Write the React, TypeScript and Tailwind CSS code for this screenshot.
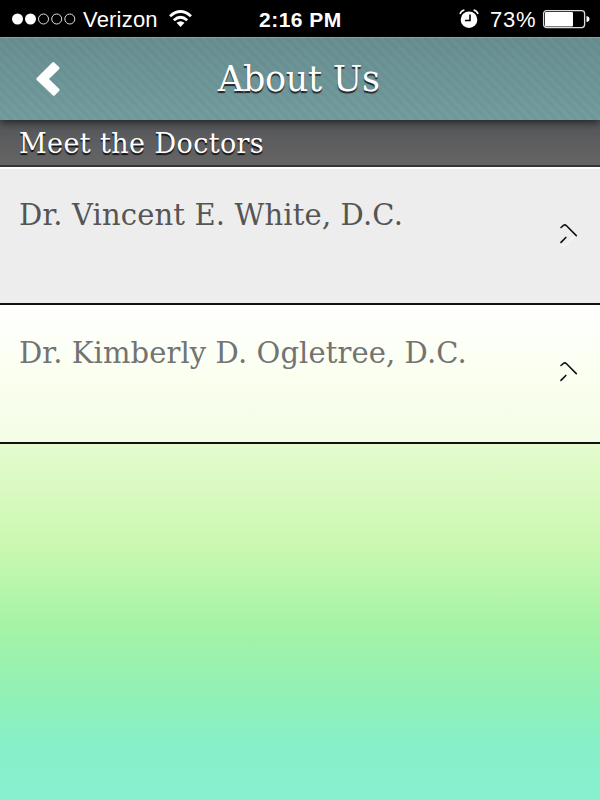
const slab = "font-['DejaVu_Serif',serif] whitespace-nowrap";

function RowArrow() {
  return (
    <svg className="mr-[20px] -mt-[4px] h-[26px] w-[24px]" viewBox="0 0 24 26" fill="none" strokeLinecap="round" strokeLinejoin="round">
      <path d="M5 24L8.500 25L20 14" stroke="#fff" strokeOpacity=".6" strokeWidth="1.500" />
      <path d="M5 6.500L7.500 4.300Q9 3.300 10.500 4.800L20.300 14.600" stroke="#111" strokeWidth="1.600" />
      <path d="M5 21.300L9.800 16.500" stroke="#111" strokeWidth="1.700" />
    </svg>
  );
}

export default function App() {
  return (
    <div className="flex h-[800px] w-[600px] flex-col overflow-hidden bg-[linear-gradient(180deg,#e5fbce_0px,#e5fbce_444px,#c9f8b0_550px,#a5f3a6_625px,#90f1b7_700px,#87f0c9_745px,#87f0cf_800px)]">
      <header className="relative z-10 shadow-[0_2px_9px_rgba(0,0,0,0.65)]">
        <div className="flex h-[37px] items-center bg-black font-['Liberation_Sans',sans-serif] text-white">
          <svg className="h-[37px] w-[76px] shrink-0" viewBox="0 0 76 37">
            <circle cx="17.500" cy="19" r="5.500" fill="#fff" />
            <circle cx="30.500" cy="19" r="5.500" fill="#fff" />
            <g fill="none" stroke="#ddd" strokeWidth="1">
              <circle cx="43.500" cy="19" r="5" />
              <circle cx="56.700" cy="19" r="5" />
              <circle cx="69.800" cy="19" r="5" />
            </g>
          </svg>
          <span className="ml-[7px] w-[76px] pt-[2px] text-[22px] tracking-[0.2px]">Verizon</span>
          <svg className="ml-[9px] h-[20px] w-[25px]" viewBox="0 0 25 20" fill="none" stroke="#fff" strokeWidth="2.700">
            <path d="M2 7.200Q12.500-2.200 23 7.200M5.800 11.200Q12.500 5.300 19.200 11.200" />
            <path d="M8.500 13.700Q12.500 10.700 16.500 13.700L12.500 18Z" fill="#fff" stroke="none" />
          </svg>
          <span className="ml-[66px] w-[84px] pt-[2px] text-[21px] font-bold tracking-[0.5px] whitespace-nowrap">2:16 PM</span>
          <svg className="ml-[116px] h-[20px] w-[20px] shrink-0" viewBox="0 0 20 20">
            <circle cx="10" cy="10.700" r="8.300" fill="#fff" />
            <path d="M1 5Q2 1.800 5.400 1M14.600 1Q18 1.800 19 5" fill="none" stroke="#fff" strokeWidth="1.500" />
            <path d="M11 5.500V11.500H6" fill="none" stroke="#000" strokeWidth="1.600" />
          </svg>
          <span className="ml-[11px] w-[47px] pt-[2px] text-[22px] tracking-[0.8px]">73%</span>
          <svg className="ml-[5px] h-[20px] w-[48px] shrink-0" viewBox="0 0 48 20">
            <rect x="1.600" y="1.600" width="41" height="17" rx="3" fill="none" stroke="#ddd" strokeWidth="1.300" />
            <rect x="3" y="3" width="28" height="14.500" rx="1" fill="#fff" />
            <path d="M44.500 7Q47.500 7.500 47.500 10T44.500 13Z" fill="#fff" />
          </svg>
        </div>
        <div className="flex h-[83px] items-center border-t border-[#7da5a7] bg-[repeating-linear-gradient(45deg,rgba(0,30,35,0.035)_0px,rgba(0,30,35,0.035)_3px,transparent_4px,transparent_7px),linear-gradient(180deg,#698f92,#739da0)]">
          <svg className="ml-[36px] h-[36px] w-[25px]" viewBox="0 0 25 36">
            <path d="M18 1.300L23.300 6.300Q24 7.200 23.300 8L13 18L23.300 28Q24 28.900 23.300 29.800L18.700 34.400Q17.800 35 17 34.400L.8 19Q0 18 .8 17L16.600 1.300Q17.300.7 18 1.300Z" fill="#fff" />
          </svg>
          <h1 className={slab + " ml-[157px] text-[35px] tracking-[-0.3px] text-white [text-shadow:0_2px_1px_#222]"}>About Us</h1>
        </div>
      </header>
      <h2 className={slab + " flex h-[47px] shrink-0 items-center border-b-2 border-[#34343a] bg-linear-to-b from-[#55565a] to-[#656565] pt-[4px] pl-[19px] text-[27px] tracking-[0.4px] text-white [text-shadow:0_2px_1px_#111]"}>Meet the Doctors</h2>
      <ul>
        <li className="flex h-[138px] items-center justify-between border-t-2 border-b-2 border-t-white border-b-[#111] bg-[#ededed] pl-[19px]">
          <span className={slab + " -mt-[41px] text-[29px] tracking-[0.15px] text-[#555]"}>Dr. Vincent E. White, D.C.</span>
          <RowArrow />
        </li>
        <li className="flex h-[139px] items-center justify-between border-b-2 border-[#111] bg-linear-to-b from-white via-[#fbfff0] to-[#f3fde6] pl-[19px]">
          <span className={slab + " -mt-[39px] text-[29px] tracking-[0.1px] text-[#737373]"}>Dr. Kimberly D. Ogletree, D.C.</span>
          <RowArrow />
        </li>
      </ul>
    </div>
  );
}
